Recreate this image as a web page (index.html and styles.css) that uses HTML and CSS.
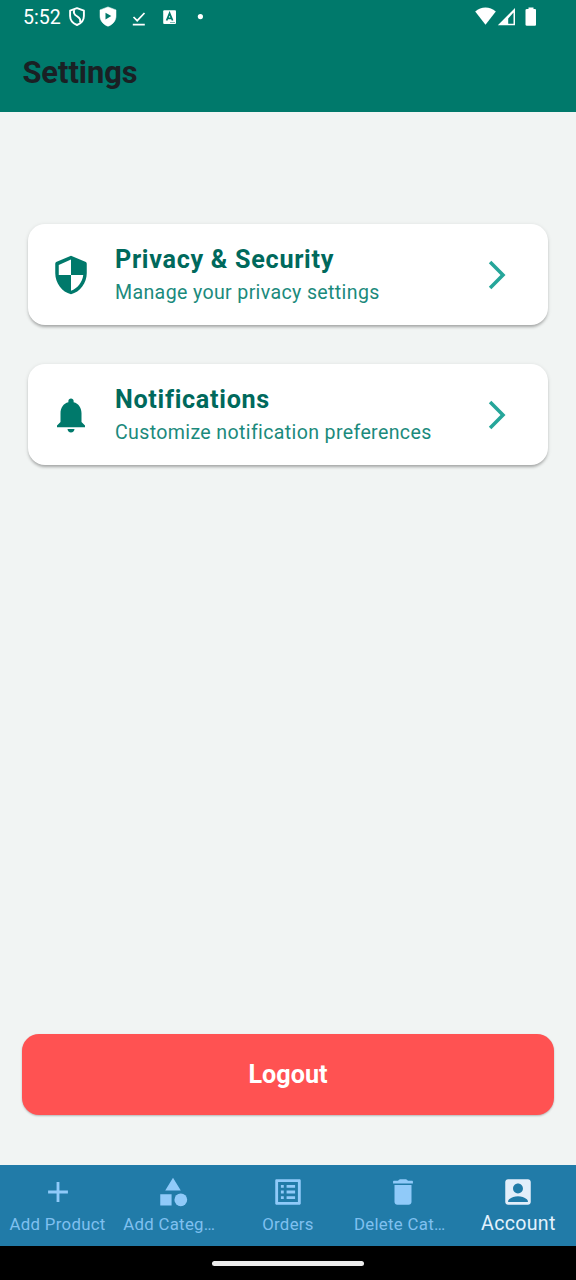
FILE: index.html
```html
<!DOCTYPE html>
<html lang="en">
<head>
<meta charset="utf-8">
<title>Settings</title>
<link rel="stylesheet" href="styles.css">
</head>
<body>
<div class="screen">
  <header class="top">
    <div class="status">
      <span class="clock">5:52</span>
      <svg class="status-left" width="140" height="24" viewBox="68 4 140 24" fill="none">
        <path d="M77 8.200l6.900 2.500v5.300c0 4.200-2.800 7.400-6.900 9-4.100-1.600-6.900-4.800-6.900-9v-5.300z" stroke="#fff" stroke-width="1.900" stroke-linejoin="round"/>
        <path d="M74.300 10c-1.300 3 .2 4.800 2.700 6.300 2.800 1.700 4 3.300 3 6.200" stroke="#fff" stroke-width="1.900"/>
        <path d="M108 6.900l8 3v6c0 5-3.400 8.600-8 10.400-4.600-1.800-8-5.400-8-10.400v-6z" fill="#fff" stroke="#fff" stroke-width=".5" stroke-linejoin="round"/>
        <path d="M105.500 12.700v6.800l5.800-3.400z" fill="#00796b"/>
        <path d="M133.500 17l3.700 3.700 7.300-7.700M132.800 24.700h12" stroke="#fff" stroke-width="1.700"/>
        <rect x="163.200" y="10.300" width="12.800" height="13.700" rx="1" fill="#fff"/>
        <path d="M166.600 20.500l3-7.200 3 7.200M167.500 18.300h4.200" stroke="#00796b" stroke-width="1.700"/>
        <path d="M170 22.500h5" stroke="#00796b" stroke-width=".5"/>
        <circle cx="200.400" cy="16.600" r="2.600" fill="#fff"/>
      </svg>
      <svg class="status-right" width="66" height="24" viewBox="472 4 66 24" fill="#fff">
        <path d="M475.200 11.500c6-5.300 14.600-5.300 20.600 0l-10.300 13.200z"/>
        <path fill-rule="evenodd" d="M515 8v17.200h-17.200zM513.500 12.500l-5.300 6v5.200h5.300z"/>
        <path d="M528.500 7.500h5v1.600h1.500q1 0 1 1v14.600q0 1-1 1h-8q-1.500 0-1.500-1v-14.600q0-1 1.500-1h1.500z"/>
      </svg>
    </div>
    <h1 class="title">Settings</h1>
  </header>

  <main class="content">
    <section class="card">
      <svg class="lead" viewBox="0 0 24 24"><path d="M12 1L3.500 4.600Q3 4.900 3 5.500V11c0 5.550 3.840 10.740 9 12 5.160-1.260 9-6.450 9-12V5.500q0-.6-.5-.9L12 1zm0 10.990h7c-.53 4.120-3.280 7.790-7 8.940V12H5V6.300l7-3.110v8.800z"/></svg>
      <div class="text">
        <h2 class="name">Privacy &amp; Security</h2>
        <p class="detail">Manage your privacy settings</p>
      </div>
      <svg class="chevron" viewBox="0 0 24 24"><path d="M6.230 20.230L8 22l10-10L8 2 6.230 3.770 14.460 12z"/></svg>
    </section>
    <section class="card">
      <svg class="lead" viewBox="0 0 24 24"><path d="M12 22c1.100 0 2-.9 2-2h-4c0 1.100.9 2 2 2zm6-6v-5c0-3.070-1.640-5.640-4.500-6.320V4c0-.83-.67-1.500-1.500-1.500s-1.500.67-1.500 1.500v.68C7.630 5.360 6 7.920 6 11v5l-2 2v1h16v-1l-2-2z"/></svg>
      <div class="text">
        <h2 class="name">Notifications</h2>
        <p class="detail">Customize notification preferences</p>
      </div>
      <svg class="chevron" viewBox="0 0 24 24"><path d="M6.230 20.230L8 22l10-10L8 2 6.230 3.770 14.460 12z"/></svg>
    </section>
    <button class="logout">Logout</button>
  </main>

  <nav class="tabs">
    <div class="tab">
      <svg class="tab-icon" viewBox="0 0 24 24"><path d="M19 13h-6v6h-2v-6H5v-2h6V5h2v6h6v2z"/></svg>
      <span class="label">Add Product</span>
    </div>
    <div class="tab">
      <svg class="tab-icon" viewBox="0 0 24 24"><path d="M12 2l-5.500 9h11zM3 13.500h8v8H3z"/><circle cx="17.500" cy="17.500" r="4.500"/></svg>
      <span class="label label-cut">Add Categ…</span>
    </div>
    <div class="tab">
      <svg class="tab-icon" viewBox="0 0 24 24"><path d="M19 5v14H5V5h14m1.100-2H3.900c-.5 0-.9.4-.9.9v16.200c0 .4.400.9.900.9h16.200c.4 0 .9-.5.900-.9V3.900c0-.5-.5-.9-.9-.9zM11 7h6v2h-6V7zm0 4h6v2h-6v-2zm0 4h6v2h-6v-2zM7 7h2v2H7V7zm0 4h2v2H7v-2zm0 4h2v2H7v-2z"/></svg>
      <span class="label">Orders</span>
    </div>
    <div class="tab">
      <svg class="tab-icon" viewBox="0 0 24 24"><path d="M6 19c0 1.100.9 2 2 2h8c1.100 0 2-.9 2-2V7H6v12zM18.500 4h-3l-.7-.7q-.3-.3-.7-.3h-4.200q-.4 0-.7.3l-.7.7h-3q-.5 0-.5.5V6h14V4.500q0-.5-.5-.5z"/></svg>
      <span class="label label-cut">Delete Cat…</span>
    </div>
    <div class="tab selected">
      <svg class="tab-icon" viewBox="0 0 24 24"><path d="M19 3H5c-1.110 0-2 .9-2 2v14c0 1.100.89 2 2 2h14c1.100 0 2-.9 2-2V5c0-1.100-.9-2-2-2zm-7 3c1.930 0 3.500 1.570 3.500 3.500S13.930 13 12 13s-3.500-1.570-3.500-3.500S10.070 6 12 6zm7 13H5v-.23c0-.62.28-1.200.76-1.580C7.470 15.820 9.640 15 12 15s4.530.82 6.240 2.190c.48.38.76.97.76 1.580V19z"/></svg>
      <span class="label">Account</span>
    </div>
  </nav>
  <footer class="system"><div class="pill"></div></footer>
</div>
</body>
</html>
```
FILE: styles.css
```css
* { box-sizing: border-box; }
body { margin: 0; font-family: Roboto, "Liberation Sans", sans-serif; }
h1, h2, p { margin: 0; }
svg { display: block; flex: none; }

.screen {
  display: flex;
  flex-direction: column;
  width: 576px;
  height: 1280px;
  background: #f1f4f3;
}

.top { height: 112px; background: #00796b; }
.status {
  display: flex;
  align-items: center;
  height: 32px;
  padding: 0 38px 0 23px;
}
.clock { width: 45px; padding-top: 3px; font-size: 19.600px; line-height: 30px; color: #fff; }
.status-right { margin-left: auto; }
.title {
  padding-left: 22.400px;
  font-size: 30.800px;
  font-weight: 700;
  line-height: 82px;
  color: #1a2024;
}

.content {
  flex: 1;
  display: flex;
  flex-direction: column;
  padding: 112px 22px 50px;
}
.card {
  display: flex;
  align-items: center;
  height: 101px;
  margin: 0 6px 39px;
  padding: 0 34px 0 22.300px;
  border-radius: 17px;
  background: #fff;
  box-shadow: 0 3px 3px -1px rgba(0, 0, 0, .25), 0 1px 4px rgba(0, 0, 0, .12);
}
.lead { width: 42px; height: 42px; fill: #00796b; }
.text { flex: 1; padding: 1px 0 0 22.700px; }
.name {
  font-size: 25.200px;
  font-weight: 700;
  line-height: 34px;
  letter-spacing: .7px;
  color: #00695c;
}
.detail {
  padding-top: 1px;
  font-size: 19.600px;
  line-height: 30px;
  letter-spacing: .35px;
  color: #1b8a7c;
}
.chevron { width: 34px; height: 34px; fill: #26a69a; }

.logout {
  height: 81px;
  margin-top: auto;
  padding: 0;
  border: 0;
  border-radius: 17px;
  background: #ff5252;
  box-shadow: 0 1px 2px rgba(0, 0, 0, .25);
  font: 700 25.200px/81px Roboto, "Liberation Sans", sans-serif;
  color: #fff;
}

.tabs {
  display: grid;
  grid-template-columns: repeat(5, 1fr);
  height: 81px;
  background: #217ba8;
}
.tab {
  display: flex;
  flex-direction: column;
  align-items: center;
  padding-top: 10px;
  fill: #90caf9;
  color: #7fc0f0;
}
.tab-icon { width: 34px; height: 34px; }
.label {
  margin-top: 3px;
  font-size: 16.800px;
  line-height: 24px;
  letter-spacing: .3px;
  white-space: nowrap;
}
.label-cut { padding-right: 7px; }
.selected { fill: #e3eefa; color: #e3f2fd; }
.selected .label { font-size: 19.600px; }

.system {
  display: flex;
  justify-content: center;
  height: 34px;
  padding-top: 15px;
  background: #000;
}
.pill { width: 152px; height: 5px; border-radius: 3px; background: #ececec; }
```
